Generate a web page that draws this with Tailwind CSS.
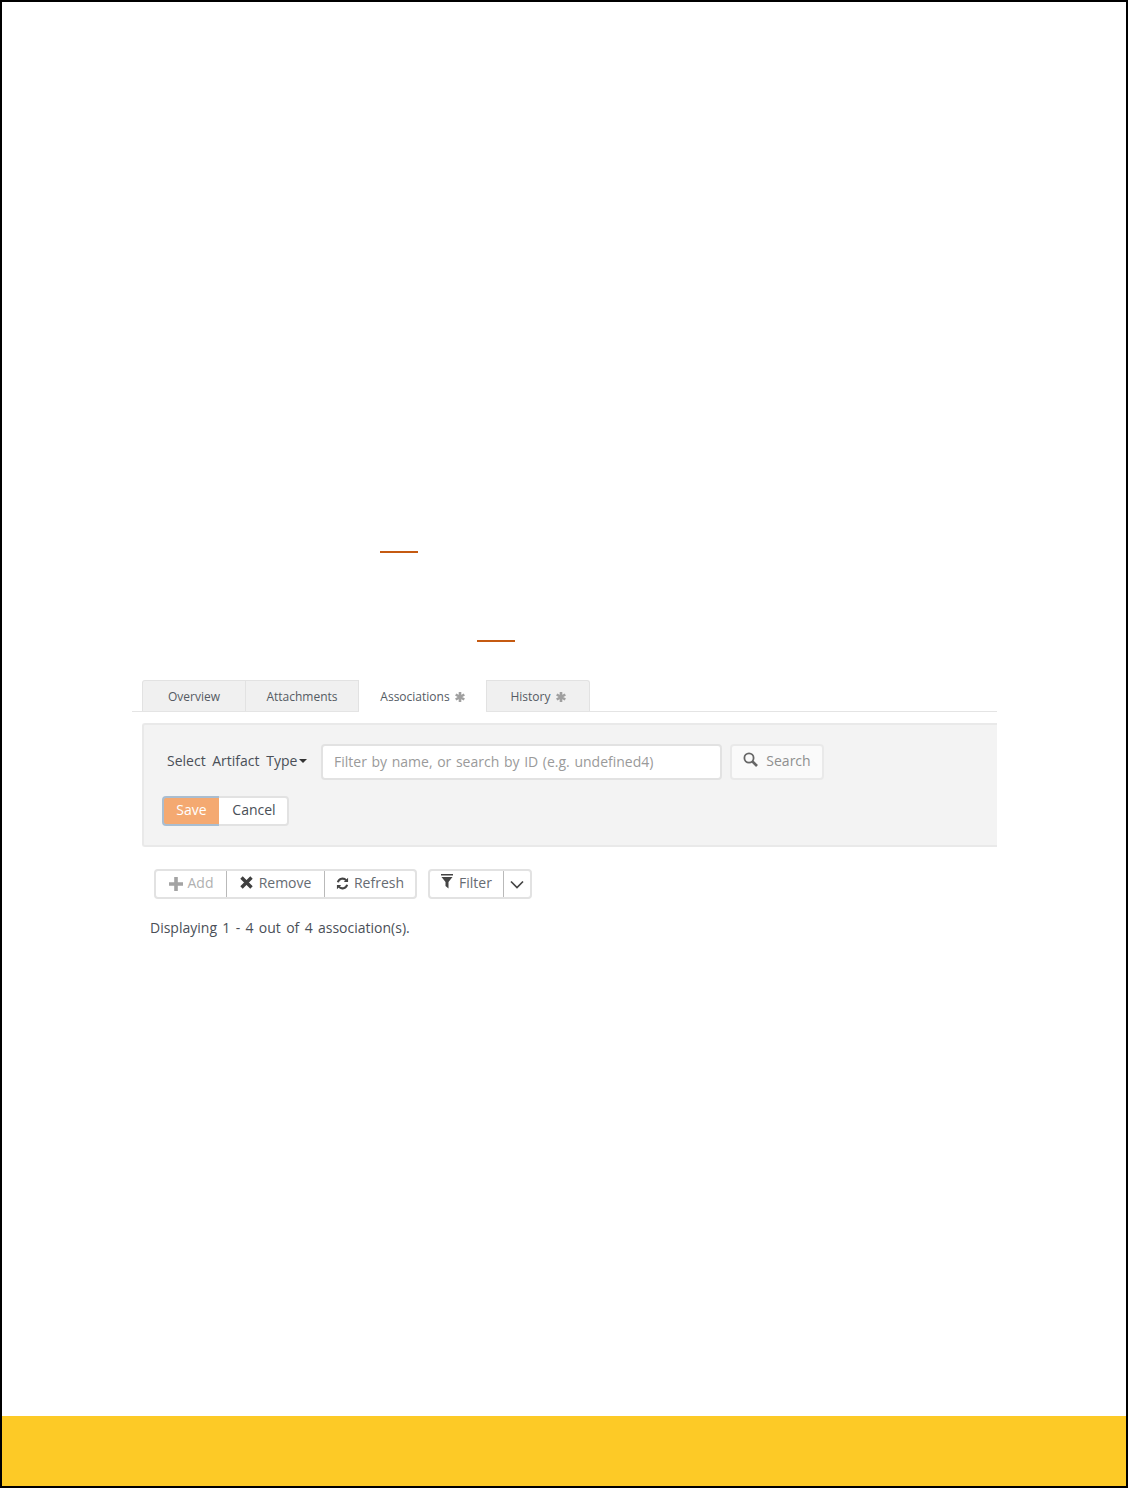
<!doctype html>
<html lang="en" class="w-full h-full">

<head>
  <meta charset="utf-8">
  <title>Associations</title>
  <script src="https://cdn.jsdelivr.net/npm/@tailwindcss/browser@4"></script>
</head>

<body class="w-full h-full bg-white">
  <div class="w-[1128px] h-[1488px] border-2 border-black flex flex-col bg-white text-[#4a4f57] font-['Open_Sans',sans-serif]">
    <!-- link underlines left over in the document -->
    <div class="h-[2px] w-[38px] bg-[#c55a11] mt-[549px] ml-[378px]"></div>
    <div class="h-[2px] w-[38px] bg-[#c55a11] mt-[87px] ml-[475px]"></div>

    <div class="w-[865px] ml-[130px] mt-[38px]">
      <!-- tabs -->
      <div class="h-[32px] pl-[10px] flex border-b border-[#e4e4e4] text-[12px] text-[#555b63]">
        <div class="w-[104px] h-[31px] pt-[2px] bg-[#f0f0f0] border border-b-0 border-[#e2e2e2] rounded-tl-[3px] flex items-center justify-center">Overview</div>
        <div class="w-[113px] h-[31px] pt-[2px] bg-[#f0f0f0] border-t border-r border-[#e2e2e2] flex items-center justify-center">Attachments</div>
        <div class="w-[127px] h-[32px] pt-[2px] bg-white flex items-center justify-center gap-[5px]">
          Associations
          <svg class="w-[10px] h-[10px] text-[#a0a0a0]" viewBox="0 0 10 10" fill="none" stroke="currentColor" stroke-width="2.6"><path d="M5 0v10M.7 2.5l8.6 5M.7 7.5l8.6-5" /></svg>
        </div>
        <div class="w-[104px] h-[31px] pt-[2px] bg-[#f0f0f0] border-t border-x border-[#e2e2e2] rounded-tr-[3px] flex items-center justify-center gap-[5px]">
          History
          <svg class="w-[10px] h-[10px] text-[#a0a0a0]" viewBox="0 0 10 10" fill="none" stroke="currentColor" stroke-width="2.6"><path d="M5 0v10M.7 2.5l8.6 5M.7 7.5l8.6-5" /></svg>
        </div>
      </div>

      <!-- search panel -->
      <div class="ml-[10px] mt-[11px] h-[124px] bg-[#f3f3f3] border-t-2 border-b-2 border-l-2 border-[#e9e9e9] rounded-l-[3px] pt-[19px]">
        <div class="flex items-center h-[36px]">
          <div class="ml-[23px] w-[154px] pb-[3px] flex items-center text-[14px] text-[#4a4f57] whitespace-nowrap [word-spacing:3px]">
            Select Artifact Type
            <span class="ml-[2px] border-x-[4px] border-x-transparent border-t-[4px] border-t-[#333]"></span>
          </div>
          <div class="w-[401px] h-[36px] pb-[2px] bg-white border-2 border-[#e2e2e2] rounded-[4px] pl-[11px] flex items-center text-[14px] text-[#9a9a9a] whitespace-nowrap [word-spacing:1px]">Filter by name, or search by ID (e.g. undefined4)</div>
          <div class="ml-[8px] w-[94px] h-[36px] pb-[3px] bg-[#fafafa] border-2 border-[#e9e9e9] rounded-[4px] flex items-center justify-center gap-[8px] text-[14px] text-[#8f8f8f]">
            <svg class="w-[15px] h-[15px] text-[#666] mb-[2px]" viewBox="0 0 15 15" fill="none" stroke="currentColor"><circle cx="6" cy="6" r="4.6" stroke-width="1.8" /><path d="M9.5 9.5l4.5 4.5" stroke-width="2.6" /></svg>
            Search
          </div>
        </div>
        <div class="flex h-[30px] mt-[16px] ml-[18px] text-[14px]">
          <div class="w-[57px] pb-[3px] bg-[#f4a971] border-2 border-r-0 border-[#a9bdd0] rounded-l-[4px] text-white flex items-center justify-center">Save</div>
          <div class="w-[70px] pb-[3px] pl-[2px] bg-white border-2 border-l-0 border-[#e2e2e2] rounded-r-[4px] text-[#4a4f57] flex items-center justify-center">Cancel</div>
        </div>
      </div>

      <!-- toolbar -->
      <div class="flex mt-[22px] ml-[22px] h-[30px] text-[14px] text-[#666b72]">
        <div class="flex border-2 border-[#e2e2e2] rounded-[4px] bg-white">
          <div class="w-[70px] pb-[3px] flex items-center justify-center gap-[5px] text-[#b0b0b0]">
            <svg class="w-[14px] h-[14px] text-[#a3a3a3] mt-[2px]" viewBox="0 0 14 14" fill="currentColor"><path d="M5.2 0h3.6v5.2H14v3.6H8.8V14H5.2V8.8H0V5.2h5.2z" /></svg>
            Add
          </div>
          <div class="w-[98px] pb-[3px] border-l border-[#b9b9b9] flex items-center justify-center gap-[6px]">
            <svg class="w-[13px] h-[13px] text-[#3f3f3f] mb-[1px]" viewBox="0 0 13 13" fill="none" stroke="currentColor" stroke-width="3.4"><path d="M1.5 1.5l10 10M11.5 1.5l-10 10" /></svg>
            Remove
          </div>
          <div class="w-[91px] pb-[3px] border-l border-[#b9b9b9] flex items-center justify-center gap-[5px]">
            <svg class="w-[13px] h-[13px] text-[#444] mt-[1px]" viewBox="0 0 14 14" fill="none" stroke="currentColor" stroke-width="2.2"><path d="M2 5.6A5.2 5.2 0 0 1 11 3.6" /><path d="M12 8.4A5.2 5.2 0 0 1 3 10.4" /><path d="M13 .8v4.6H8.4zM1 13.2V8.6h4.6z" fill="currentColor" stroke="none" /></svg>
            Refresh
          </div>
        </div>
        <div class="flex ml-[11px] border-2 border-[#e2e2e2] rounded-[4px] bg-white">
          <div class="w-[73px] pb-[3px] flex items-center justify-center gap-[6px]">
            <svg class="w-[12px] h-[15px] text-[#444] mb-[2px]" viewBox="0 0 12 15" fill="currentColor"><path d="M0 0h12v1.4H0zM.5 3h11L7.5 8v6.5L4.5 12V8z" /></svg>
            Filter
          </div>
          <div class="w-[27px] border-l border-[#b9b9b9] flex items-center justify-center">
            <svg class="w-[14px] h-[9px] text-[#444] mt-[1px]" viewBox="0 0 14 9" fill="none" stroke="currentColor" stroke-width="1.7"><path d="M1 1.5l6 6 6-6" /></svg>
          </div>
        </div>
      </div>

      <p class="mt-[19px] ml-[18px] text-[14px] leading-[20px] text-[#4a4f57] whitespace-nowrap [word-spacing:1.7px]">Displaying 1 - 4 out of 4 association(s).</p>
    </div>

    <!-- yellow footer band -->
    <div class="mt-auto h-[70px] bg-[#fdca26]"></div>
  </div>
</body>

</html>
